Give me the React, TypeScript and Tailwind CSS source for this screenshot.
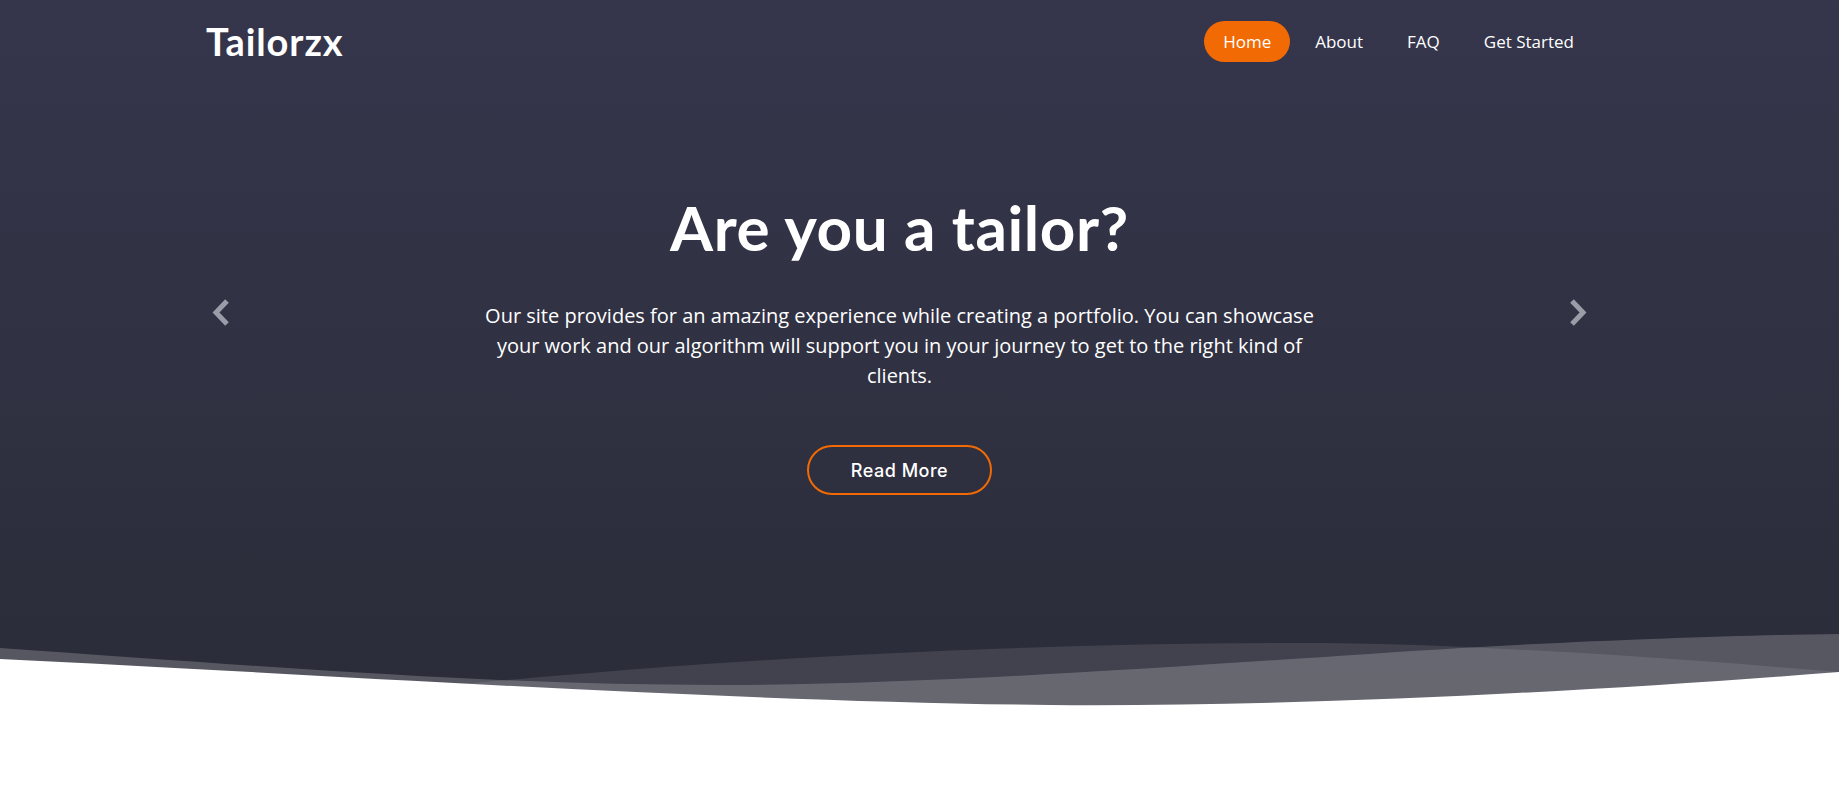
import React from "react";

const navItems = ["Home", "About", "FAQ", "Get Started"];

function Chevron({ dir }: { dir: "left" | "right" }) {
  return (
    <svg
      width="18"
      height="29"
      viewBox="0 0 18 29"
      className={dir === "right" ? "rotate-180" : ""}
    >
      <path
        d="M15 3 L4 14.5 L15 26"
        fill="none"
        stroke="#9b9ca8"
        strokeWidth="5"
        strokeLinejoin="miter"
      />
    </svg>
  );
}

function Waves() {
  return (
    <svg
      className="block w-full h-[100px]"
      viewBox="0 620 1839 100"
      preserveAspectRatio="none"
    >
      {/* back wave */}
      <path
        d="M0 722 C250 700 450 684 613 670 C800 655 1050 642 1300 642 C1450 642 1650 655 1839 671 L1839 720 L0 720 Z"
        fill="rgba(255,255,255,0.1)"
      />
      {/* middle wave */}
      <path
        d="M0 647 C300 668 500 684 720 684 C950 684 1250 660 1461 647 C1600 639 1750 634 1839 633 L1839 720 L0 720 Z"
        fill="rgba(255,255,255,0.2)"
      />
      {/* front wave */}
      <path
        d="M0 658 C300 672 700 700 1050 704 C1300 706 1600 690 1839 671 L1839 720 L0 720 Z"
        fill="#ffffff"
      />
    </svg>
  );
}

export default function App() {
  return (
    <div className="min-h-screen bg-white">
      <section className="bg-gradient-to-b from-[#35364c] to-[#2b2c38]">
        <div className="pl-[206px] pr-[246px]">
          {/* Header */}
          <header className="h-[83px] flex items-center justify-between">
            <a className="text-[38px] leading-[1.2] font-bold text-white font-['Lato',sans-serif] tracking-[0.9px]">
              Tailorzx
            </a>
            <nav className="flex items-center gap-[6px] font-['Open_Sans',sans-serif] text-[17px] text-white">
              {navItems.map((item, i) => (
                <a
                  key={item}
                  className={`h-[41px] px-[19px] flex items-center rounded-full ${
                    i === 0 ? "bg-[#f26a04]" : ""
                  }`}
                >
                  {item}
                </a>
              ))}
            </nav>
          </header>

          {/* Carousel */}
          <div className="flex items-start justify-between pt-[107px] pb-[126px]">
            <button className="mt-[108px] px-[6px]">
              <Chevron dir="left" />
            </button>
            <div className="flex flex-col items-center text-center text-white">
              <h2 className="text-[62px] leading-[1.2] font-bold tracking-[0.6px] font-['Lato',sans-serif]">
                Are you a tailor?
              </h2>
              <p className="mt-[37px] w-[845px] text-[20px] leading-[30px] font-['Open_Sans',sans-serif]">
                Our site provides for an amazing experience while creating a portfolio. You can showcase your work and our algorithm will support you in your journey to get to the right kind of clients.
              </p>
              <a className="mt-[54px] w-[185px] h-[50px] flex items-center justify-center rounded-full border-2 border-[#f26a04] text-[18px] font-medium tracking-[0.5px] font-['Inter',sans-serif]">
                Read More
              </a>
            </div>
            <button className="mt-[108px] px-[6px]">
              <Chevron dir="right" />
            </button>
          </div>
        </div>
        <Waves />
      </section>
    </div>
  );
}
